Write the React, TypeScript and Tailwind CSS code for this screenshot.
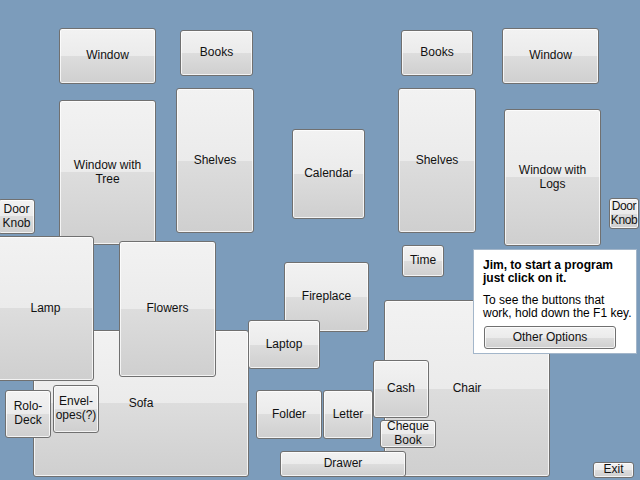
import type { ReactNode } from 'react'

const base =
  'absolute flex items-center justify-center text-center rounded-[3px] border border-[#707070] bg-[linear-gradient(to_bottom,#f2f2f2_0%,#ebebeb_50%,#dddddd_50%,#cfcfcf_100%)] shadow-[inset_0_0_0_1px_rgba(255,255,255,0.75)] text-[12px] text-[#111] leading-[14px] pb-[2px] select-none'

function Btn({ className, children }: { className: string; children: ReactNode }) {
  return <div className={`${base} ${className}`}>{children}</div>
}

export default function App() {
  return (
    <div className="relative w-[640px] h-[480px] overflow-hidden bg-[#7c9cbb] font-['Liberation_Sans',Arial,sans-serif]">
      {/* left wall */}
      <Btn className="left-[59px] top-[100px] w-[97px] h-[145px]">
        Window with
        <br />
        Tree
      </Btn>
      <Btn className="left-[176px] top-[88px] w-[78px] h-[145px]">Shelves</Btn>
      <Btn className="left-[59px] top-[28px] w-[97px] h-[56px]">Window</Btn>
      <Btn className="left-[180px] top-[30px] w-[73px] h-[46px]">Books</Btn>
      <Btn className="left-[-2px] top-[199px] w-[37px] h-[35px] leading-[12px]">
        Door
        <br />
        Knob
      </Btn>
      <Btn className="left-[33px] top-[330px] w-[216px] h-[147px]">Sofa</Btn>
      <Btn className="left-[-3px] top-[236px] w-[97px] h-[145px]">Lamp</Btn>
      <Btn className="left-[119px] top-[241px] w-[97px] h-[136px]">Flowers</Btn>
      <Btn className="left-[5px] top-[390px] w-[46px] h-[48px] leading-[12px]">
        Rolo-
        <br />
        Deck
      </Btn>
      <Btn className="left-[53px] top-[385px] w-[46px] h-[48px] leading-[12px]">
        Envel-
        <br />
        opes(?)
      </Btn>

      {/* middle */}
      <Btn className="left-[292px] top-[129px] w-[73px] h-[90px]">Calendar</Btn>
      <Btn className="left-[284px] top-[262px] w-[85px] h-[70px]">Fireplace</Btn>
      <Btn className="left-[248px] top-[320px] w-[72px] h-[49px]">Laptop</Btn>
      <Btn className="left-[256px] top-[390px] w-[66px] h-[49px]">Folder</Btn>
      <Btn className="left-[323px] top-[390px] w-[50px] h-[49px]">Letter</Btn>

      {/* right wall */}
      <Btn className="left-[401px] top-[30px] w-[72px] h-[46px]">Books</Btn>
      <Btn className="left-[398px] top-[88px] w-[78px] h-[145px]">Shelves</Btn>
      <Btn className="left-[402px] top-[245px] w-[42px] h-[32px]">Time</Btn>
      <Btn className="left-[502px] top-[28px] w-[97px] h-[56px]">Window</Btn>
      <Btn className="left-[504px] top-[109px] w-[97px] h-[137px]">
        Window with
        <br />
        Logs
      </Btn>
      <Btn className="left-[609px] top-[198px] w-[30px] h-[31px] leading-[12px] text-[11px] tracking-[-0.4px]">
        Door
        <br />
        Knob
      </Btn>
      <Btn className="left-[384px] top-[300px] w-[166px] h-[177px]">Chair</Btn>
      <Btn className="left-[373px] top-[360px] w-[56px] h-[58px]">Cash</Btn>
      <Btn className="left-[380px] top-[420px] w-[56px] h-[28px] leading-[12px] pb-0">
        Cheque
        <br />
        Book
      </Btn>
      <Btn className="left-[280px] top-[451px] w-[126px] h-[26px]">Drawer</Btn>
      <Btn className="left-[593px] top-[462px] w-[41px] h-[16px] pb-0">Exit</Btn>

      {/* hint panel */}
      <div className="absolute left-[473px] top-[249px] w-[164px] h-[105px] border border-[#a3b6ca] bg-white pl-[9px] pr-[2px] pt-[9px] text-[12px] leading-[13px] text-black whitespace-nowrap">
        <p className="font-bold">
          Jim, to start a program
          <br />
          just click on it.
        </p>
        <p className="mt-[9px]">
          To see the buttons that
          <br />
          work, hold down the F1 key.
        </p>
        <div className="mt-[6px] ml-px w-[132px] h-[23px] flex items-center justify-center rounded-[3px] border border-[#707070] bg-[linear-gradient(to_bottom,#f2f2f2_0%,#ebebeb_50%,#dddddd_50%,#cfcfcf_100%)] shadow-[inset_0_0_0_1px_rgba(255,255,255,0.75)] text-[#111]">
          Other Options
        </div>
      </div>
    </div>
  )
}
